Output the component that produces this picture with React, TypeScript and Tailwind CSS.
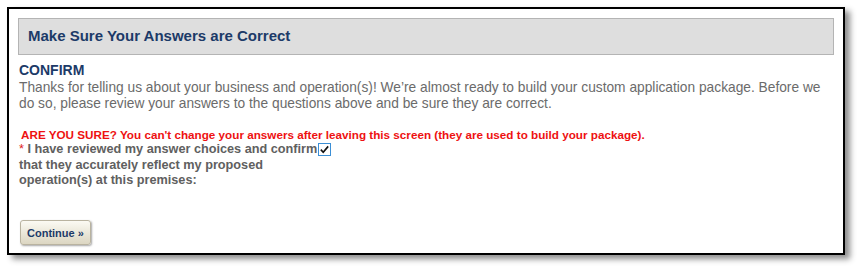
import React, { useState } from 'react';

export default function App() {
  const [checked, setChecked] = useState(true);

  return (
    <div className="w-[864px] h-[266px] bg-white pt-[7px] pl-[7px] font-['Liberation_Sans',Arial,sans-serif]">
      <div className="w-[838px] h-[248px] border-2 border-black bg-white shadow-[5px_4px_6px_rgba(0,0,0,0.45)] pt-[9px] px-[9px]">
        <div className="h-[37px] border border-[#b4b4b4] bg-[#dedede] flex items-center pl-[9px]">
          <h2 className="text-[15px] font-bold text-[#1c3a68]">Make Sure Your Answers are Correct</h2>
        </div>

        <div className="mt-[7px] pl-[1px]">
          <h3 className="text-[14px] leading-[16px] font-bold text-[#1c3a68]">CONFIRM</h3>
          <p className="mt-[2px] text-[13.75px] leading-[16px] text-[#6b6b6b]">
            Thanks for telling us about your business and operation(s)! We’re almost ready to build your custom application package. Before we do so, please review your answers to the questions above and be sure they are correct.
          </p>
        </div>

        <p className="mt-[16px] pl-[3px] text-[11.7px] leading-[14px] font-bold text-[#ee1111]">
          ARE YOU SURE? You can't change your answers after leaving this screen (they are used to build your package).
        </p>

        <label className="block w-[320px] pl-[1px] text-[12.7px] leading-[15.5px] font-bold text-[#606060]">
          <span className="text-[#e02020] font-normal">*</span> I have reviewed my answer choices and confirm
          <span className="inline-block align-[-2px] ml-[1px]">
            <button
              type="button"
              onClick={() => setChecked(!checked)}
              className="w-[13px] h-[13px] border border-[#3b8fd6] bg-white flex items-center justify-center"
            >
              {checked && (
                <svg viewBox="0 0 12 12" width="11" height="11">
                  <path d="M2 6.2 L4.6 9 L10 2.6" fill="none" stroke="#111" strokeWidth="1.8" />
                </svg>
              )}
            </button>
          </span>
          <br />
          that they accurately reflect my proposed
          <br />
          operation(s) at this premises:
        </label>

        <div className="mt-[31px] pl-[2px]">
          <button
            type="button"
            className="h-[25px] px-[6px] rounded-[3px] border border-[#b9b3a0] bg-gradient-to-b from-[#fbfaf3] to-[#dcd6c2] shadow-[1px_1px_2px_rgba(0,0,0,0.35)] text-[11px] font-bold text-[#1c3a68]"
          >
            Continue »
          </button>
        </div>
      </div>
    </div>
  );
}
